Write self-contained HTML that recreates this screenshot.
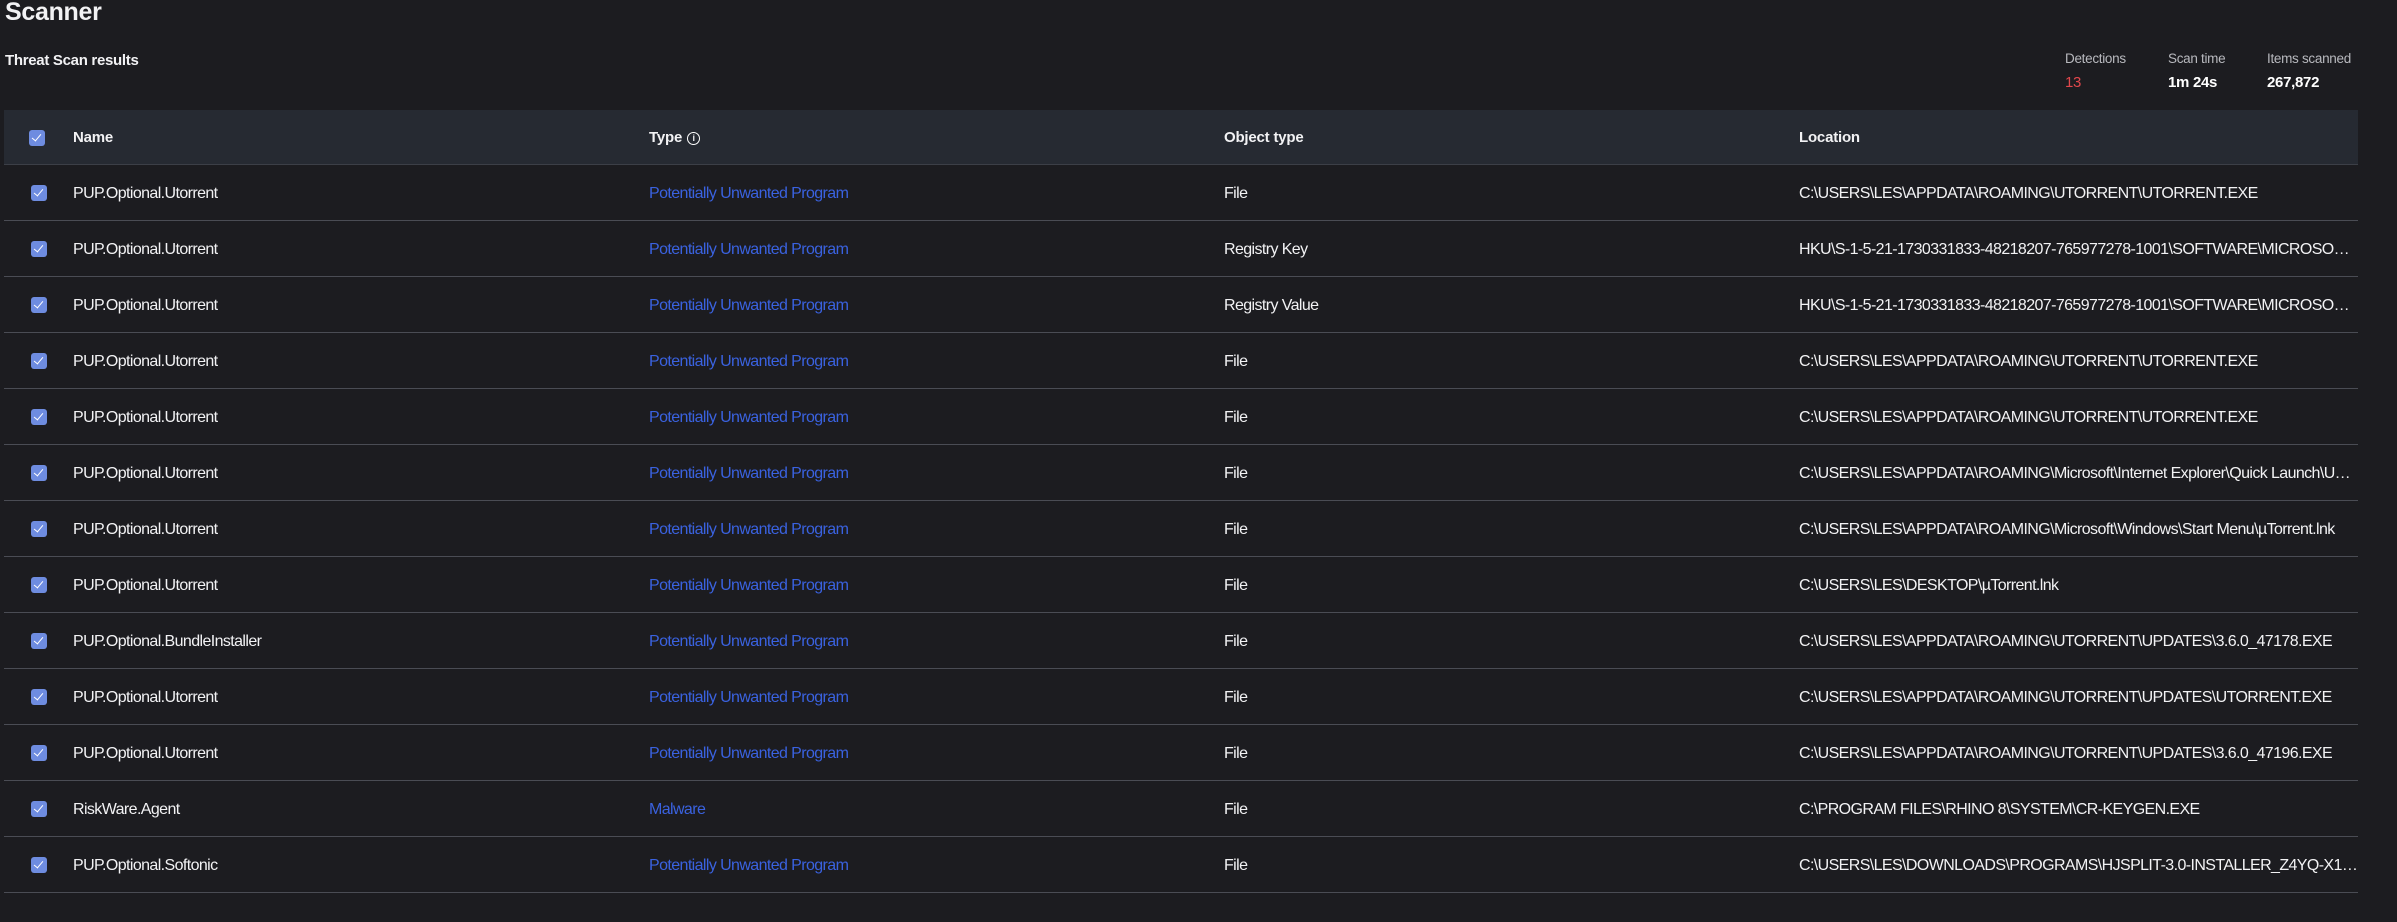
<!DOCTYPE html>
<html><head><meta charset="utf-8"><style>
html,body{margin:0;padding:0;background:#1c1c20;width:2397px;height:922px;overflow:hidden;font-family:"Liberation Sans",sans-serif;color:#f2f2f4}
.title{position:absolute;left:5px;top:-2px;font-size:25px;font-weight:bold;letter-spacing:-0.3px}
.sub{position:absolute;left:5px;top:52px;font-size:15px;font-weight:bold;letter-spacing:-0.3px}
.stat{position:absolute;top:51px;font-size:13.5px;color:#b8b9be;letter-spacing:-0.3px}
.stat b{display:block;margin-top:8px;font-size:15px;color:#fff}
table{position:absolute;left:4px;top:110px;width:2354px;border-collapse:collapse;table-layout:fixed}
th{background:#262a32;height:54px;text-align:left;font-size:15px;font-weight:bold;border-bottom:1px solid #3c3f47;padding:0;letter-spacing:-0.2px}
td{height:55px;border-bottom:1px solid #4a4c54;padding:2px 0 0 0;font-size:16px;white-space:nowrap;overflow:hidden;text-overflow:ellipsis;letter-spacing:-0.6px;box-sizing:border-box}
tr.r td{height:56px}
.cb{display:inline-block;width:16px;height:16px;border-radius:3px;background:#6e8ce0;vertical-align:middle;position:relative;margin-left:27px}
.cb:after{content:"";position:absolute;left:5px;top:2px;width:4px;height:8px;border:solid #fff;border-width:0 1.5px 1.5px 0;transform:rotate(40deg)}
.lnk{color:#3a62e0}
.i{display:inline-block;width:11px;height:11px;border:1.3px solid #fff;border-radius:50%;font-size:9px;line-height:11px;text-align:center;margin-left:5px;vertical-align:1px;font-weight:bold}
</style></head><body>
<div class="title">Scanner</div>
<div class="sub">Threat Scan results</div>
<div class="stat" style="left:2065px">Detections<b style="color:#e0474c;font-weight:normal">13</b></div>
<div class="stat" style="left:2168px">Scan time<b>1m 24s</b></div>
<div class="stat" style="left:2267px">Items scanned<b>267,872</b></div>
<table>
<colgroup><col style="width:69px"><col style="width:576px"><col style="width:575px"><col style="width:575px"><col style="width:559px"></colgroup>
<tr><th><span class="cb" style="margin-left:25px"></span></th><th>Name</th><th>Type<span class="i">i</span></th><th>Object type</th><th>Location</th></tr>
<tr class="r"><td><span class="cb"></span></td><td>PUP.Optional.Utorrent</td><td class="lnk">Potentially Unwanted Program</td><td>File</td><td>C:\USERS\LES\APPDATA\ROAMING\UTORRENT\UTORRENT.EXE</td></tr>
<tr class="r"><td><span class="cb"></span></td><td>PUP.Optional.Utorrent</td><td class="lnk">Potentially Unwanted Program</td><td>Registry Key</td><td>HKU\S-1-5-21-1730331833-48218207-765977278-1001\SOFTWARE\MICROSOFT\WINDOWS</td></tr>
<tr class="r"><td><span class="cb"></span></td><td>PUP.Optional.Utorrent</td><td class="lnk">Potentially Unwanted Program</td><td>Registry Value</td><td>HKU\S-1-5-21-1730331833-48218207-765977278-1001\SOFTWARE\MICROSOFT\WINDOWS</td></tr>
<tr class="r"><td><span class="cb"></span></td><td>PUP.Optional.Utorrent</td><td class="lnk">Potentially Unwanted Program</td><td>File</td><td>C:\USERS\LES\APPDATA\ROAMING\UTORRENT\UTORRENT.EXE</td></tr>
<tr class="r"><td><span class="cb"></span></td><td>PUP.Optional.Utorrent</td><td class="lnk">Potentially Unwanted Program</td><td>File</td><td>C:\USERS\LES\APPDATA\ROAMING\UTORRENT\UTORRENT.EXE</td></tr>
<tr class="r"><td><span class="cb"></span></td><td>PUP.Optional.Utorrent</td><td class="lnk">Potentially Unwanted Program</td><td>File</td><td>C:\USERS\LES\APPDATA\ROAMING\Microsoft\Internet Explorer\Quick Launch\User Pinned</td></tr>
<tr class="r"><td><span class="cb"></span></td><td>PUP.Optional.Utorrent</td><td class="lnk">Potentially Unwanted Program</td><td>File</td><td>C:\USERS\LES\APPDATA\ROAMING\Microsoft\Windows\Start Menu\µTorrent.lnk</td></tr>
<tr class="r"><td><span class="cb"></span></td><td>PUP.Optional.Utorrent</td><td class="lnk">Potentially Unwanted Program</td><td>File</td><td>C:\USERS\LES\DESKTOP\µTorrent.lnk</td></tr>
<tr class="r"><td><span class="cb"></span></td><td>PUP.Optional.BundleInstaller</td><td class="lnk">Potentially Unwanted Program</td><td>File</td><td>C:\USERS\LES\APPDATA\ROAMING\UTORRENT\UPDATES\3.6.0_47178.EXE</td></tr>
<tr class="r"><td><span class="cb"></span></td><td>PUP.Optional.Utorrent</td><td class="lnk">Potentially Unwanted Program</td><td>File</td><td>C:\USERS\LES\APPDATA\ROAMING\UTORRENT\UPDATES\UTORRENT.EXE</td></tr>
<tr class="r"><td><span class="cb"></span></td><td>PUP.Optional.Utorrent</td><td class="lnk">Potentially Unwanted Program</td><td>File</td><td>C:\USERS\LES\APPDATA\ROAMING\UTORRENT\UPDATES\3.6.0_47196.EXE</td></tr>
<tr class="r"><td><span class="cb"></span></td><td>RiskWare.Agent</td><td class="lnk">Malware</td><td>File</td><td>C:\PROGRAM FILES\RHINO 8\SYSTEM\CR-KEYGEN.EXE</td></tr>
<tr class="r"><td><span class="cb"></span></td><td>PUP.Optional.Softonic</td><td class="lnk">Potentially Unwanted Program</td><td>File</td><td>C:\USERS\LES\DOWNLOADS\PROGRAMS\HJSPLIT-3.0-INSTALLER_Z4YQ-X1.EXE</td></tr>
</table>
</body></html>
